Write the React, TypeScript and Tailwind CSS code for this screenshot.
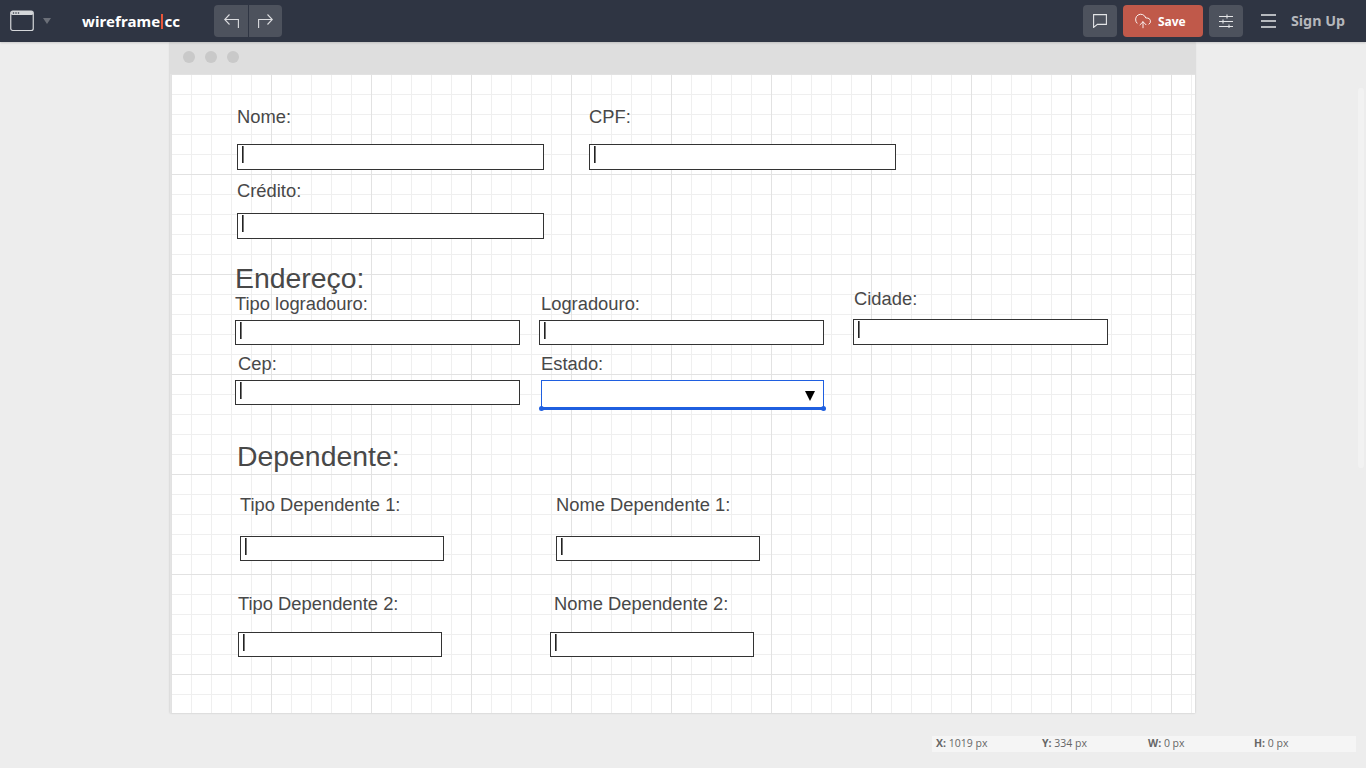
import { CloudUpload } from "lucide-react";

// label / input positions on the wireframe canvas (page coords minus canvas origin 171,74)
const LABELS: { text: string; x: number; y: number; big?: boolean }[] = [
  { text: "Nome:", x: 66, y: 34 },
  { text: "CPF:", x: 418, y: 34 },
  { text: "Crédito:", x: 66, y: 108 },
  { text: "Endereço:", x: 64, y: 190, big: true },
  { text: "Tipo logradouro:", x: 64, y: 221 },
  { text: "Logradouro:", x: 370, y: 221 },
  { text: "Cidade:", x: 683, y: 216 },
  { text: "Cep:", x: 67, y: 281 },
  { text: "Estado:", x: 370, y: 281 },
  { text: "Dependente:", x: 66, y: 368, big: true },
  { text: "Tipo Dependente 1:", x: 69, y: 422 },
  { text: "Nome Dependente 1:", x: 385, y: 422 },
  { text: "Tipo Dependente 2:", x: 67, y: 521 },
  { text: "Nome Dependente 2:", x: 383, y: 521 },
];

const INPUTS: { x: number; y: number; w: number; h: number }[] = [
  { x: 66, y: 70, w: 307, h: 26 },
  { x: 418, y: 70, w: 307, h: 26 },
  { x: 66, y: 139, w: 307, h: 26 },
  { x: 64, y: 246, w: 285, h: 25 },
  { x: 368, y: 246, w: 285, h: 25 },
  { x: 682, y: 245, w: 255, h: 26 },
  { x: 64, y: 306, w: 285, h: 25 },
  { x: 69, y: 462, w: 204, h: 25 },
  { x: 385, y: 462, w: 204, h: 25 },
  { x: 67, y: 558, w: 204, h: 25 },
  { x: 379, y: 558, w: 204, h: 25 },
];

function WindowIcon() {
  return (
    <svg width="24" height="22" viewBox="0 0 24 22" fill="none">
      <rect x="0.75" y="1" width="22.5" height="19.5" rx="2" stroke="#d5d7da" strokeWidth="1.2" />
      <rect x="1" y="1" width="22" height="4" rx="1.5" fill="#d5d7da" />
      <circle cx="3.5" cy="3" r="0.8" fill="#2f3543" />
      <circle cx="6" cy="3" r="0.8" fill="#2f3543" />
      <circle cx="8.5" cy="3" r="0.8" fill="#2f3543" />
    </svg>
  );
}

function IconButton({ children }: { children: React.ReactNode }) {
  return <button className="w-[34px] h-[32px] rounded bg-[#4d525d] flex items-center justify-center text-[#e4e5e7]">{children}</button>;
}

export default function App() {
  return (
    <div className="w-[1366px] h-[768px] overflow-hidden bg-[#ededed] relative font-['Liberation_Sans',sans-serif]">
      <header className="h-[42px] bg-[#2f3543] flex items-center shadow-[0_1px_2px_rgba(0,0,0,0.15)] relative z-10">
        <div className="ml-[10px] flex items-center">
          <WindowIcon />
          <span className="ml-[9px] w-0 h-0 border-x-[4px] border-x-transparent border-t-[6px] border-t-[#6b6f78]" />
        </div>
        <div className="ml-[31px] w-[132px] text-[15px] font-bold tracking-[0.1px] text-white font-['Noto_Sans',sans-serif] flex items-center">
          wireframe<span className="w-[2px] h-[15px] bg-[#e8563a] mx-[1px]" />cc
        </div>
        <div className="flex h-[32px] rounded bg-[#4d525d]">
          <button className="w-[35px] flex items-center justify-center border-r border-[#2f3543]">
            <svg width="15" height="14" viewBox="0 0 15 14" fill="none" stroke="#dcdde0" strokeWidth="1.1">
              <path d="M5.5 0.5 L0.7 5.5 L5.5 10.5 M0.7 5.5 H14.4 V14" />
            </svg>
          </button>
          <button className="w-[33px] flex items-center justify-center">
            <svg width="15" height="14" viewBox="0 0 15 14" fill="none" stroke="#dcdde0" strokeWidth="1.1">
              <path d="M9.5 0.5 L14.3 5.5 L9.5 10.5 M14.3 5.5 H0.6 V14" />
            </svg>
          </button>
        </div>
        <div className="ml-auto flex items-center mr-[21px]">
          <IconButton>
            <svg width="14" height="14" viewBox="0 0 14 14" fill="none" stroke="#e4e5e7" strokeWidth="1.1">
              <path d="M0.6 0.6 H13.4 V10.4 H4.4 L0.6 13.4 Z" />
            </svg>
          </IconButton>
          <button className="ml-[6px] w-[80px] h-[32px] rounded bg-[#c0594a] text-white flex items-center pl-[11px] gap-[6px] text-[12px] font-bold font-['Noto_Sans',sans-serif]">
            <CloudUpload size={18} strokeWidth={1.2} /><span className="pt-[1px]">Save</span>
          </button>
          <div className="ml-[6px]">
            <IconButton>
              <svg width="14" height="14" viewBox="0 0 14 14" fill="none" stroke="#e4e5e7" strokeWidth="1.1">
                <path d="M0 2.5 H14 M0 7.5 H14 M0 12.5 H14" />
                <path d="M8 0.5 V4.5 M4 5.5 V9.5 M10 10.5 V14" />
              </svg>
            </IconButton>
          </div>
          <svg className="ml-[18px]" width="15" height="14" viewBox="0 0 15 14" fill="none" stroke="#e4e5e7" strokeWidth="1.3">
            <path d="M0 1 H15 M0 7 H15 M0 13 H15" />
          </svg>
          <span className="ml-[15px] text-[14.3px] font-bold text-[#b5b7bc] font-['Noto_Sans',sans-serif]">Sign Up</span>
        </div>
      </header>

      <main className="absolute left-[170px] top-[42px] w-[1025px] h-[671px] shadow-[0_0_2px_rgba(0,0,0,0.2)] flex flex-col">
        <div className="h-[32px] bg-[#dedede] flex items-center gap-[10px] pl-[13px] pb-[2px]">
          <span className="w-[12px] h-[12px] rounded-full bg-[#c9c9c9]" />
          <span className="w-[12px] h-[12px] rounded-full bg-[#c9c9c9]" />
          <span className="w-[12px] h-[12px] rounded-full bg-[#c9c9c9]" />
        </div>
        <div className="flex-1 border-l border-[#e4e4e4] bg-white relative bg-[linear-gradient(to_right,#e2e2e2_1px,transparent_1px),linear-gradient(to_bottom,#e2e2e2_1px,transparent_1px),linear-gradient(to_right,#efefef_1px,transparent_1px),linear-gradient(to_bottom,#efefef_1px,transparent_1px)] bg-[size:100px_100px,100px_100px,20px_20px,20px_20px]">
          {LABELS.map((l) => (
            <div key={l.text} style={{ left: l.x, top: l.y }}
              className={`absolute whitespace-nowrap text-[#484848] leading-none ${l.big ? "text-[28.4px]" : "text-[18.35px]"}`}>
              {l.text}
            </div>
          ))}
          {INPUTS.map((b, i) => (
            <div key={i} style={{ left: b.x, top: b.y, width: b.w, height: b.h }}
              className="absolute border border-[#333333] bg-white">
              <div className="absolute left-[4px] top-[1px] w-[1px] h-[17px] bg-[#222222] shadow-[1px_0_0_#777777]" />
            </div>
          ))}
          {/* selected dropdown */}
          <div className="absolute left-[370px] top-[306px] w-[283px] h-[30px] border border-[#1f5fe0] border-b-[3px] bg-white">
            <span className="absolute right-[8px] top-[10px] w-0 h-0 border-x-[5px] border-x-transparent border-t-[10px] border-t-black" />
            <span className="absolute -left-[3px] -bottom-[4px] w-[5px] h-[5px] rounded-full bg-[#1f5fe0]" />
            <span className="absolute -right-[3px] -bottom-[4px] w-[5px] h-[5px] rounded-full bg-[#1f5fe0]" />
          </div>
        </div>
      </main>

      <div className="absolute left-[1358px] top-[88px] w-[6px] h-[380px] bg-[#f2f2f2] rounded-[3px]" />

      <footer className="absolute left-[932px] top-[736px] w-[424px] h-[16px] bg-[#f5f5f5] flex items-center text-[10.5px] text-[#666666] font-['Open_Sans',sans-serif]">
        <span className="absolute left-[4px]"><b>X:</b> 1019 px</span>
        <span className="absolute left-[110px]"><b>Y:</b> 334 px</span>
        <span className="absolute left-[216px]"><b>W:</b> 0 px</span>
        <span className="absolute left-[322px]"><b>H:</b> 0 px</span>
      </footer>
    </div>
  );
}
